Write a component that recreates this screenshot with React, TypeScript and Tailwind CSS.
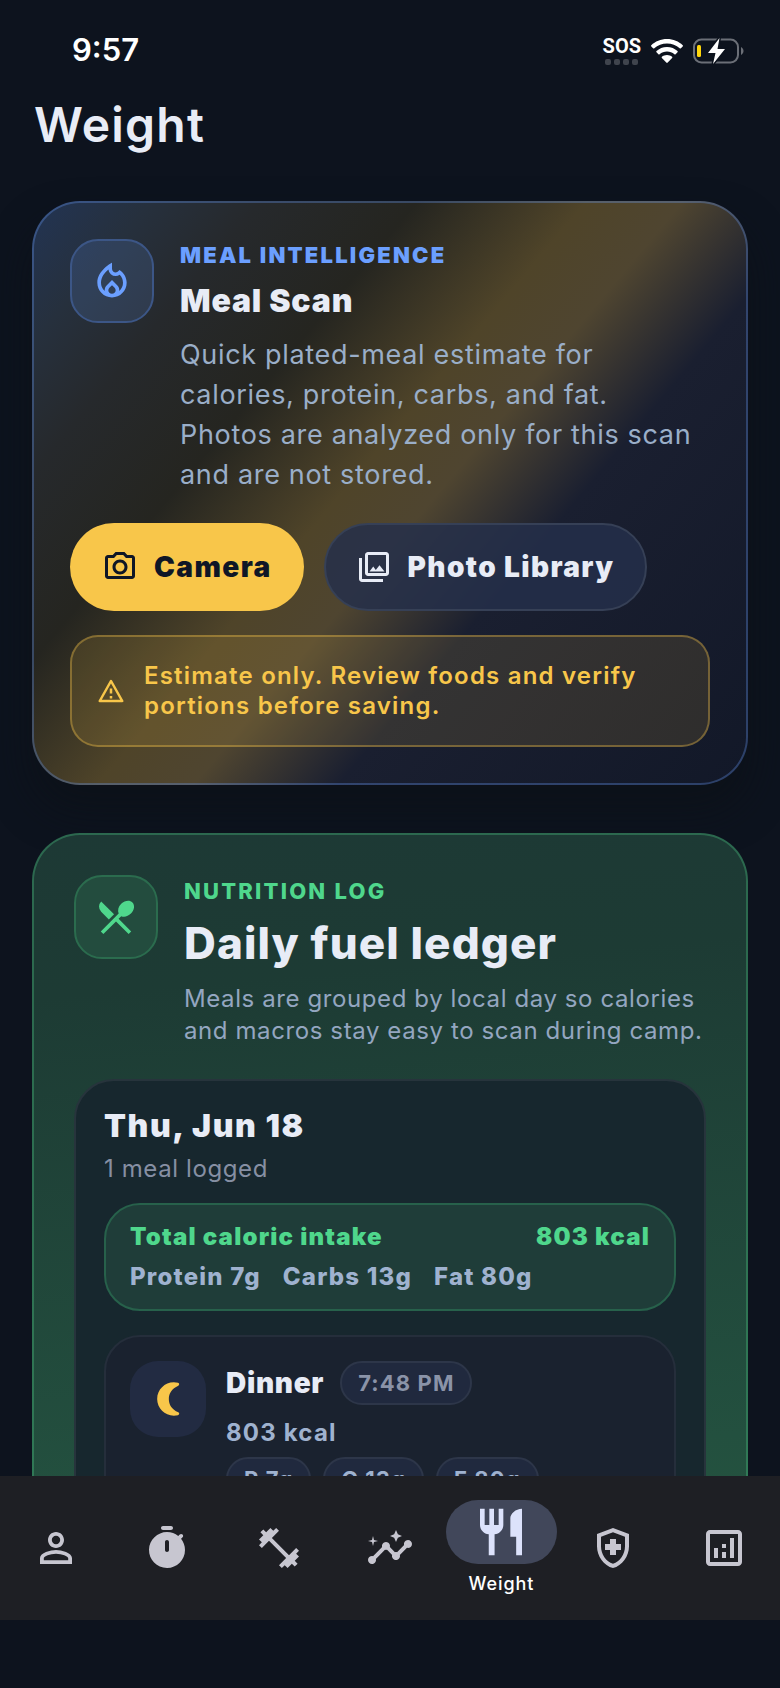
import type { ReactNode } from 'react'
import {
  MdFitnessCenter,
  MdInsights,
  MdOutlineAnalytics,
  MdOutlineHealthAndSafety,
  MdOutlineLocalFireDepartment,
  MdOutlinePhotoCamera,
  MdOutlinePhotoLibrary,
  MdPersonOutline,
  MdRestaurant,
  MdRestaurantMenu,
} from 'react-icons/md'

const macros = ['Protein 7g', 'Carbs 13g', 'Fat 80g']
const mealMacros = ['P 7g', 'C 13g', 'F 80g']

const TimerIcon = () => (
  <svg viewBox="0 0 24 24" fill="currentColor" fillRule="evenodd" className="size-12">
    <path d="M14 1h-4c-.55 0-1 .45-1 1s.45 1 1 1h4c.55 0 1-.45 1-1s-.45-1-1-1zm-2 13c.55 0 1-.45 1-1V9c0-.55-.45-1-1-1s-1 .45-1 1v4c0 .55.45 1 1 1zm7.03-6.61l.75-.75c.38-.38.39-1.01 0-1.4l-.01-.01c-.39-.39-1.01-.38-1.4 0l-.75.75C16.07 4.74 14.12 4 12 4c-4.8 0-8.88 3.96-9 8.76C2.87 17.84 6.94 22 12 22c4.98 0 9-4.03 9-9 0-2.12-.74-4.07-1.97-5.61z" />
  </svg>
)

const MoonIcon = () => (
  <svg viewBox="0 0 24 24" fill="currentColor" className="size-10">
    <path d="M15.5 2C10 2 5.5 6.480 5.5 12s4.480 10 10 10c.9 0 1.730-.12 2.500-.3.900-.25 1-1.200.2-1.700C14.200 18.300 12.500 15.300 12.500 12s1.700-6.300 5.700-8c.8-.5.700-1.450-.2-1.700-.770-.2-1.600-.3-2.500-.3z" />
  </svg>
)

const WarningIcon = () => (
  <svg viewBox="0 0 24 24" fill="none" stroke="currentColor" strokeWidth="2" strokeLinejoin="round" className="size-[30px] shrink-0">
    <path d="M12 4 21 20H3z" />
    <path d="M12 10v4M12 16v2" />
  </svg>
)

const StatusBar = () => (
  <div className="flex h-[95px] shrink-0 items-center justify-between pl-[72px] pr-9 pt-1.5 text-white">
    <span className="text-[31px] font-semibold">9:57</span>
    <div className="flex items-center gap-2.5">
      <div className="flex flex-col items-center gap-1">
        <span className="font-['Roboto',sans-serif] text-xl/[18px] font-bold">SOS</span>
        <div className="flex gap-[3px]">
          {[0, 1, 2, 3].map((dot) => (
            <span key={dot} className="size-1.5 rounded-xs bg-[#3f444d]" />
          ))}
        </div>
      </div>
      <svg viewBox="0 0 32 24" className="h-6 w-8" fill="currentColor">
        <path d="M16 0C9.800 0 4.200 2.400.300 6.200c-.4.400-.4.900 0 1.200l1.800 1.900c.4.400.9.400 1.200 0C6.700 6.200 11.200 4.400 16 4.400s9.300 1.800 12.700 4.900c.3.400.8.400 1.200 0l1.800-1.900c.4-.3.400-.8 0-1.200C27.800 2.400 22.200 0 16 0z" />
        <path d="M16 8c-4.100 0-7.800 1.600-10.500 4.100-.4.400-.4.900 0 1.200l1.900 1.900c.3.300.8.300 1.200 0 2-1.800 4.600-2.800 7.400-2.800s5.400 1 7.400 2.800c.4.300.9.300 1.200 0l1.900-1.900c.4-.3.400-.8 0-1.200C23.800 9.600 20.100 8 16 8z" />
        <path d="M16 15.900c-2 0-3.800.7-5.100 1.900-.4.300-.4.800 0 1.200l4.400 4.600c.4.400 1 .4 1.400 0l4.400-4.600c.4-.4.400-.9 0-1.200-1.300-1.200-3.100-1.900-5.100-1.900z" />
      </svg>
      <svg viewBox="0 0 51 26" className="h-[26px] w-[51px]">
        <rect x="1" y="1.500" width="44" height="23" rx="7.500" fill="none" stroke="#6b6f77" strokeWidth="2" />
        <path d="M48 9c1.500.8 2.500 2.300 2.500 4S49.500 16.200 48 17z" fill="#6b6f77" />
        <rect x="4" y="7" width="4" height="12" rx="1.500" fill="#ffd60a" />
        <path d="M26.500 0 15 15h7.500L20 26 32 11h-7.500z" fill="#fff" stroke="#0d131e" strokeWidth="3" paintOrder="stroke" />
      </svg>
    </div>
  </div>
)

const Chip = ({ children, className }: { children: ReactNode; className: string }) => (
  <span className={`flex h-11 items-center rounded-full border-2 border-[#2d3649] bg-[#20293e] px-4 text-[22px] font-bold tracking-wider ${className}`}>
    {children}
  </span>
)

const MealScanCard = () => (
  <section className="rounded-[48px] border-2 border-[#6b9fff]/30 bg-[linear-gradient(130deg,#223454_0%,#26303d_10%,#26292c_19%,#252520_32%,#4f4429_46%,#4f4530_54%,#1a1f30_66%,#121828_100%)] bg-origin-border p-9 shadow-[0_24px_40px_rgba(12,16,22,0.6)]">
    <div className="flex items-start gap-[26px]">
      <div className="flex size-[84px] shrink-0 items-center justify-center rounded-[28px] border-2 border-[#3c5686] bg-[#6b9fff]/15 text-[#6b9fff]">
        <MdOutlineLocalFireDepartment size={44} />
      </div>
      <div className="min-w-0 flex-1">
        <p className="pt-1 text-[22px] font-black leading-6 tracking-widest text-[#6b9fff]">MEAL INTELLIGENCE</p>
        <h2 className="mt-3 text-[32px] font-black leading-[44px] tracking-wide text-[#e8ecf6]">Meal Scan</h2>
        <p className="mt-3 pr-2 text-[27px] leading-10 tracking-wide text-[#9aaec8]">
          Quick plated-meal estimate for calories, protein, carbs, and fat. Photos are analyzed only for this scan and are not stored.
        </p>
      </div>
    </div>
    <div className="mt-7 flex gap-5">
      <button type="button" className="flex h-[88px] items-center gap-4 rounded-full bg-[#f8c64a] px-8 text-[28px] font-black tracking-wider text-[#0f1626]">
        <MdOutlinePhotoCamera size={36} />
        Camera
      </button>
      <button type="button" className="flex h-[88px] items-center gap-4 rounded-full border-2 border-[#364056] bg-[#242f4a]/85 px-[30px] text-[28px] font-black tracking-wider text-[#e8ecf6]">
        <MdOutlinePhotoLibrary size={36} />
        Photo Library
      </button>
    </div>
    <div className="mt-6 flex items-center gap-[18px] rounded-[28px] border-2 border-[#f8c64a]/35 bg-[#f8c64a]/12 px-6 py-6 text-[#f8c64a]">
      <WarningIcon />
      <p className="text-2xl/[30px] font-semibold tracking-wider">Estimate only. Review foods and verify portions before saving.</p>
    </div>
  </section>
)

const NutritionLogCard = () => (
  <section className="mt-12 rounded-[48px] border-2 border-[#4fd78c]/30 bg-[linear-gradient(175deg,#1d3935_0%,#1d3b34_20%,#23503f_80%,#25553f_100%)] bg-origin-border p-10">
    <div className="flex items-start gap-[26px]">
      <div className="flex size-[84px] shrink-0 items-center justify-center rounded-[28px] border-2 border-[#2b6c4e] bg-[#234c3e] text-[#4fd78c]">
        <MdRestaurantMenu size={44} />
      </div>
      <div className="min-w-0 flex-1">
        <p className="pt-1 text-[22px] font-extrabold leading-6 tracking-widest text-[#4fd78c]">NUTRITION LOG</p>
        <h2 className="mt-3 text-[44px] font-extrabold leading-[56px] tracking-wide text-[#e8ecf6]">Daily fuel ledger</h2>
        <p className="mt-3 text-2xl/8 tracking-wide text-[#94a6c0]">
          Meals are grouped by local day so calories and macros stay easy to scan during camp.
        </p>
      </div>
    </div>
    <div className="mt-8 rounded-[40px] border-2 border-[#27343c] bg-[#17272e] px-7 pb-7 pt-6">
      <h3 className="text-[32px] font-black leading-[42px] tracking-wider text-[#e8ecf6]">Thu, Jun 18</h3>
      <p className="mt-1 text-2xl/9 tracking-wide text-[#868fa3]">1 meal logged</p>
      <div className="mt-4 rounded-[36px] border-2 border-[#27614b] bg-[#1f3d39] px-6 py-3 text-2xl/10 tracking-wider">
        <div className="flex justify-between font-black text-[#4fd78c]">
          <span>Total caloric intake</span>
          <span>803 kcal</span>
        </div>
        <div className="flex gap-[22px] font-extrabold text-[#9fb2cf]">
          {macros.map((macro) => (
            <span key={macro}>{macro}</span>
          ))}
        </div>
      </div>
      <article className="mt-6 flex items-start gap-5 rounded-[36px] border-2 border-[#252e3b] bg-[#1a222f] p-6">
        <div className="flex size-[76px] shrink-0 items-center justify-center rounded-[28px] bg-[#222b42] text-[#f8c64a]">
          <MoonIcon />
        </div>
        <div>
          <div className="flex items-center gap-4">
            <h4 className="text-[28px] font-black tracking-wide text-[#e8ecf6]">Dinner</h4>
            <Chip className="text-[#8a93a8]">7:48 PM</Chip>
          </div>
          <p className="mt-2 text-2xl/10 font-bold tracking-wider text-[#9fb2cf]">803 kcal</p>
          <div className="mt-1 flex gap-3">
            {mealMacros.map((macro) => (
              <Chip key={macro} className="text-[#9fb2cf]">{macro}</Chip>
            ))}
          </div>
        </div>
      </article>
    </div>
  </section>
)

const tabs = [
  { name: 'Profile', icon: <MdPersonOutline size={48} /> },
  { name: 'Timer', icon: <TimerIcon /> },
  { name: 'Training', icon: <MdFitnessCenter size={48} /> },
  { name: 'Insights', icon: <MdInsights size={48} /> },
  { name: 'Weight', icon: <MdRestaurant size={56} />, active: true },
  { name: 'Health', icon: <MdOutlineHealthAndSafety size={48} /> },
  { name: 'Analytics', icon: <MdOutlineAnalytics size={48} /> },
]

const TabBar = () => (
  <nav className="mb-[68px] grid h-36 shrink-0 grid-cols-7 bg-[#1e1f24] text-[#c7c6d0]">
    {tabs.map((tab) =>
      tab.active ? (
        <button key={tab.name} type="button" aria-current="page" className="flex flex-col items-center pt-6">
          <span className="flex h-16 w-full items-center justify-center rounded-full bg-[#41475a] text-[#dce2fb]">{tab.icon}</span>
          <span className="mt-2 text-lg/6 font-medium tracking-wider text-white">{tab.name}</span>
        </button>
      ) : (
        <button key={tab.name} type="button" aria-label={tab.name} className="flex items-center justify-center">
          {tab.icon}
        </button>
      ),
    )}
  </nav>
)

export default function App() {
  return (
    <div className="flex h-screen flex-col bg-[#0d131e] font-['Inter',sans-serif]">
      <StatusBar />
      <main className="min-h-0 flex-1 overflow-y-auto px-8 [scrollbar-width:none]">
        <h1 className="mb-[46px] px-0.5 text-5xl/[60px] font-semibold tracking-wide text-[#e8ecf6]">Weight</h1>
        <MealScanCard />
        <NutritionLogCard />
      </main>
      <TabBar />
    </div>
  )
}
